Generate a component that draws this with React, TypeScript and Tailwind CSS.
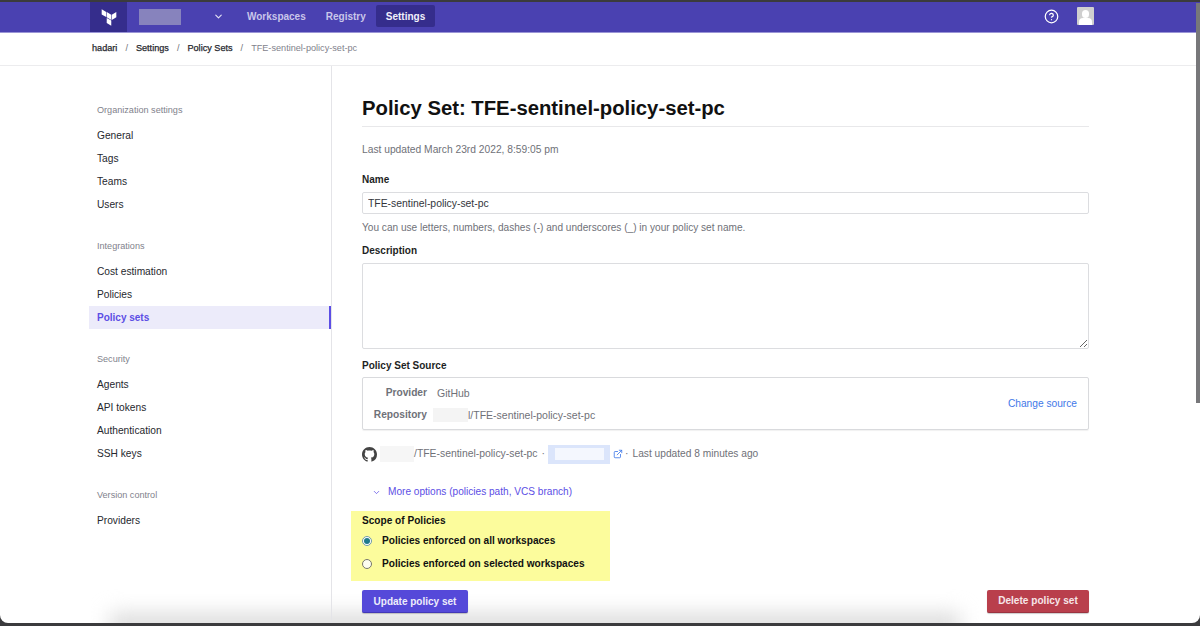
import React from 'react';
import { ChevronDown, CircleHelp, ExternalLink } from 'lucide-react';

const groups = [
  { title: 'Organization settings', items: ['General', 'Tags', 'Teams', 'Users'] },
  { title: 'Integrations', items: ['Cost estimation', 'Policies', 'Policy sets'] },
  { title: 'Security', items: ['Agents', 'API tokens', 'Authentication', 'SSH keys'] },
  { title: 'Version control', items: ['Providers'] },
];

const TerraformLogo = () => (
  <svg width="16" height="17" viewBox="0 0 16.5 17" fill="#fff">
    <path d="M5.9 2.9 10.6 5.6V11L5.9 8.3Z" />
    <path d="M11.1 5.6 15.8 2.9V8.3L11.1 11Z" />
    <path d="M.7 0 5.4 2.7V8.1L.7 5.4Z" />
    <path d="M5.9 8.9 10.6 11.6V17L5.9 14.3Z" />
  </svg>
);

const GithubMark = () => (
  <svg width="15" height="15" viewBox="0 0 16 16" fill="#444">
    <path d="M8 0C3.58 0 0 3.58 0 8c0 3.54 2.29 6.53 5.47 7.59.4.07.55-.17.55-.38 0-.19-.01-.82-.01-1.49-2.01.37-2.53-.49-2.69-.94-.09-.23-.48-.94-.82-1.13-.28-.15-.68-.52-.01-.53.63-.01 1.08.58 1.23.82.72 1.21 1.87.87 2.33.66.07-.52.28-.87.51-1.07-1.78-.2-3.64-.89-3.64-3.95 0-.87.31-1.59.82-2.15-.08-.2-.36-1.02.08-2.12 0 0 .67-.21 2.2.82.64-.18 1.32-.27 2-.27s1.36.09 2 .27c1.53-1.04 2.2-.82 2.2-.82.44 1.1.16 1.92.08 2.12.51.56.82 1.27.82 2.15 0 3.07-1.87 3.75-3.65 3.95.29.25.54.73.54 1.48 0 1.07-.01 1.93-.01 2.2 0 .21.15.46.55.38A8.01 8.01 0 0 0 16 8c0-4.42-3.58-8-8-8Z" />
  </svg>
);

const Sidebar = () => (
  <aside className="relative z-10 w-[332px] shrink-0 border-r border-[#e4e4e8] pt-[34px] pl-[89px]">
    {groups.map((group, i) => (
      <div key={group.title} className={i > 0 ? 'mt-[20px]' : ''}>
        <div className="h-[20px] mb-[4px] pl-[8px] pt-[2px] flex items-center text-[9.1px] text-[#7f828c]">{group.title}</div>
        {group.items.map((item) => (
          <div
            key={item}
            className={
              item === 'Policy sets'
                ? 'h-[23px] pl-[8px] flex items-center text-[10px] font-bold text-[#5c4ee5] bg-[#ecebfa] border-r-2 border-[#5c4ee5]'
                : 'h-[23px] pl-[8px] flex items-center text-[10.2px] text-[#26282e]'
            }
          >
            {item}
          </div>
        ))}
      </div>
    ))}
  </aside>
);

export default function App() {
  return (
    <div
      className="relative w-[1200px] h-[626px] overflow-hidden bg-[#3b3b3d] pt-[2px] text-[#26282e]"
      style={{ fontFamily: '"Liberation Sans", Arial, sans-serif' }}
    >
      <div className="relative h-[621px] bg-white rounded-b-[8px] flex flex-col overflow-hidden">
        <header className="h-[31px] shrink-0 bg-[#4a41b1] border-b border-[#9a95d6] flex items-center pl-[90px] pr-[106px]">
          <div className="w-[37px] h-full bg-[#352d8c] flex items-center justify-center">
            <TerraformLogo />
          </div>
          <div className="ml-[12px] w-[42px] h-[16px] bg-[#8783bd]" />
          <ChevronDown className="ml-[32px] -mt-[2px] text-[#e4e2f5]" size={11} strokeWidth={2.5} />
          <nav className="ml-[23px] -mt-[2px] flex items-center text-[10px] font-bold text-[#c9c6ea]">
            <span>Workspaces</span>
            <span className="ml-[20px]">Registry</span>
            <span className="ml-[10px] h-[22px] px-[10px] flex items-center rounded-[2px] bg-[#352d8c] text-[#f1f0fb]">Settings</span>
          </nav>
          <div className="ml-auto -mt-[2px] flex items-center gap-[18px]">
            <CircleHelp className="text-white" size={15} strokeWidth={2} />
            <div className="w-[17px] h-[18px] bg-[#cfcfcf] rounded-[1px] overflow-hidden flex flex-col items-center">
              <div className="mt-[3px] w-[7px] h-[8px] rounded-full bg-white" />
              <div className="w-[13px] h-[7px] rounded-t-[4px] bg-white" />
            </div>
          </div>
        </header>

        <div className="h-[33px] shrink-0 border-b border-[#ececee] flex items-center pl-[92px] text-[9.15px] text-[#26282e] [-webkit-text-stroke:0.25px_#26282e]">
          <span>hadari</span>
          <span className="mx-[8px] text-[#6f7178] [-webkit-text-stroke:0]">/</span>
          <span>Settings</span>
          <span className="mx-[8px] text-[#6f7178] [-webkit-text-stroke:0]">/</span>
          <span>Policy Sets</span>
          <span className="mx-[8px] text-[#6f7178] [-webkit-text-stroke:0]">/</span>
          <span className="text-[#7f828c] [-webkit-text-stroke:0]">TFE-sentinel-policy-set-pc</span>
        </div>

        <div className="flex-1 flex min-h-0">
          <Sidebar />
          <main className="relative z-10 w-[727px] ml-[30px] shrink-0">
            <h1 className="mt-[28px] h-[28px] flex items-center text-[20.3px] font-bold text-[#111]">Policy Set: TFE-sentinel-policy-set-pc</h1>
            <div className="mt-[4px] h-[1px] bg-[#e8e8ea]" />
            <p className="mt-[16px] h-[14px] flex items-center text-[10.25px] text-[#6f7178]">Last updated March 23rd 2022, 8:59:05 pm</p>

            <label className="block mt-[16px] h-[14px] leading-[14px] text-[10px] font-bold text-[#1d1f24]">Name</label>
            <input
              readOnly
              value="TFE-sentinel-policy-set-pc"
              className="mt-[5px] block w-full h-[22px] px-[5px] border border-[#dcdde0] rounded-[2px] text-[10.4px] text-[#33353b] outline-none"
            />
            <p className="mt-[7px] h-[14px] flex items-center text-[10.1px] text-[#6f7178]">You can use letters, numbers, dashes (-) and underscores (_) in your policy set name.</p>

            <label className="block mt-[9px] h-[14px] leading-[14px] text-[10px] font-bold text-[#1d1f24]">Description</label>
            <textarea readOnly className="mt-[5px] block w-full h-[86px] border border-[#dcdde0] rounded-[2px] outline-none" />

            <label className="block mt-[10px] h-[14px] leading-[14px] text-[10px] font-bold text-[#1d1f24]">Policy Set Source</label>
            <div className="mt-[4px] h-[53px] pt-[1px] border border-[#d9dadd] rounded-[2px] shadow-[0_1px_1px_rgba(0,0,0,0.06)] flex items-center text-[10.5px] text-[#6f7178] pr-[11px]">
              <div className="grid grid-cols-[64px_auto] gap-x-[10px] gap-y-[10px] leading-[12px]">
                <span className="text-[10.2px] font-bold text-right text-[#6f7178]">Provider</span>
                <span>GitHub</span>
                <span className="text-[10.2px] font-bold text-right text-[#6f7178]">Repository</span>
                <span className="-ml-[4px] flex items-center">
                  <span className="w-[35px] h-[14px] -my-[1px] bg-[#f4f4f4]" />
                  <span>l/TFE-sentinel-policy-set-pc</span>
                </span>
              </div>
              <span className="ml-auto text-[10.2px] text-[#3f78e8]">Change source</span>
            </div>

            <div className="mt-[14px] h-[20px] flex items-center text-[10.4px] text-[#6f7178]">
              <GithubMark />
              <span className="ml-[3px] w-[34px] h-[16px] bg-[#f6f6f6]" />
              <span>/TFE-sentinel-policy-set-pc</span>
              <span className="ml-[4px] mr-[3px]">·</span>
              <span className="w-[62px] h-[19px] bg-[#dbe5fb] flex items-center justify-center">
                <span className="w-[49px] h-[12px] bg-[#f4f7fe]" />
              </span>
              <ExternalLink className="ml-[3px] text-[#3f78e8]" size={10} strokeWidth={2} />
              <span className="ml-[2px] mr-[4px]">·</span>
              <span className="text-[10.2px]">Last updated 8 minutes ago</span>
            </div>

            <div className="mt-[21px] h-[14px] pl-[10px] flex items-center text-[10.1px] text-[#5c4ee5]">
              <ChevronDown size={9} strokeWidth={2} />
              <span className="ml-[7px]">More options (policies path, VCS branch)</span>
            </div>

            <section className="mt-[12px] -ml-[11px] w-[259px] h-[70px] bg-[#fcfc9c] pl-[11px] pt-[3px] text-[10.1px] font-bold text-[#111]">
              <div className="h-[14px] flex items-center">Scope of Policies</div>
              <div className="mt-[6px] h-[14px] flex items-center">
                <span className="w-[10px] h-[10px] rounded-full border border-[#6f9aa8] bg-white flex items-center justify-center">
                  <span className="w-[6px] h-[6px] rounded-full bg-[#1f7a8c]" />
                </span>
                <span className="ml-[10px]">Policies enforced on all workspaces</span>
              </div>
              <div className="mt-[9px] h-[14px] flex items-center">
                <span className="w-[10px] h-[10px] rounded-full border border-[#77776a] bg-[#fdfdf0]" />
                <span className="ml-[10px]">Policies enforced on selected workspaces</span>
              </div>
            </section>

            <div className="mt-[9px] flex justify-between">
              <button className="w-[106px] h-[23px] rounded-[2px] bg-[#5549d9] border-b border-[#4338b8] text-[10px] font-bold text-[#eeedfb] shadow-[0_1px_1px_rgba(0,0,0,0.2)]">Update policy set</button>
              <button className="w-[102px] h-[23px] rounded-[2px] bg-[#b93f4c] border-b border-[#9b3340] text-[10.1px] font-bold text-[#f6e6e8] shadow-[0_1px_1px_rgba(0,0,0,0.2)]">Delete policy set</button>
            </div>
          </main>
        </div>

        {/* soft shadow of the window below, it shows through at the bottom edge */}
        <div className="absolute left-[110px] right-[240px] -bottom-[14px] h-[24px] bg-[#dcdcdc] blur-[10px] pointer-events-none" />
      </div>

      {/* scrollbar thumb lying over the page */}
      <div className="absolute right-0 top-[3px] w-[4px] h-[400px] bg-[#77777a]" />
    </div>
  );
}
